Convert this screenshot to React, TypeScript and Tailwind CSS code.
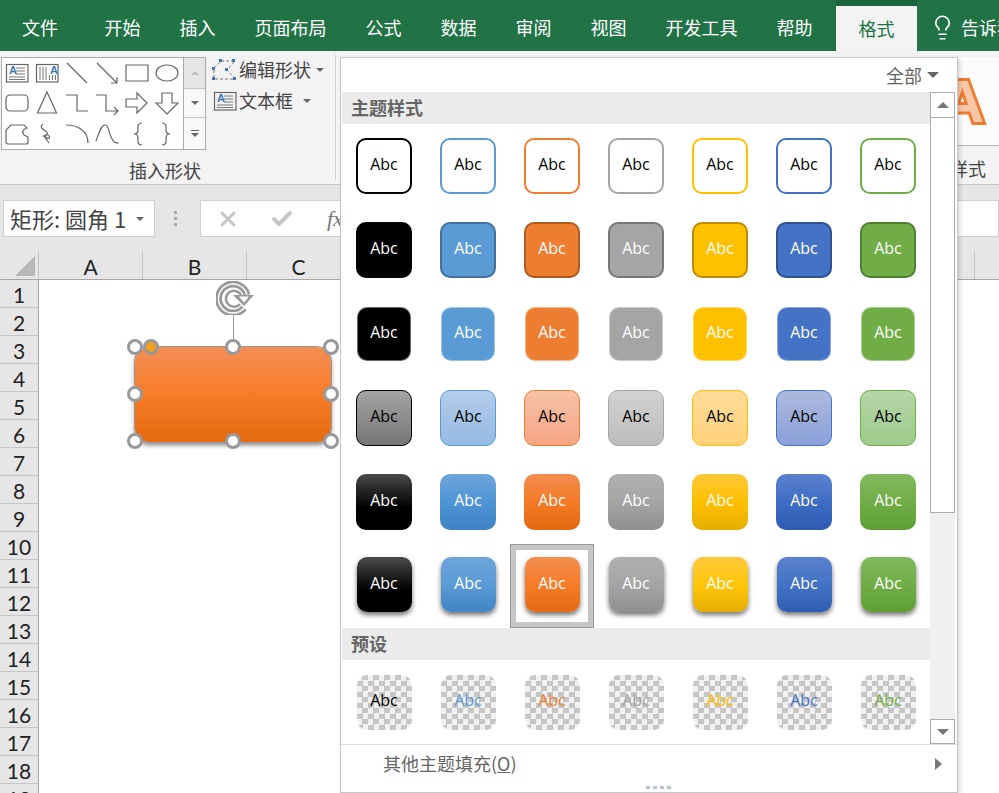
import { Check, Lightbulb, X } from 'lucide-react';

const TABS = [
  { label: '开始', className: 'ml-[5px]' },
  { label: '插入', className: '' },
  { label: '页面布局', className: '' },
  { label: '公式', className: '' },
  { label: '数据', className: '' },
  { label: '审阅', className: '' },
  { label: '视图', className: '' },
  { label: '开发工具', className: '' },
  { label: '帮助', className: '' },
];

const COLUMNS = ['A', 'B', 'C', 'D', 'E', 'F', 'G', 'H', 'I'];
const ROWS = Array.from({ length: 19 }, (_, i) => i + 1);

const ROW_1 = 'h-[56px] w-[56px] border-2 bg-white text-black';
const ROW_2 = 'h-[56px] w-[56px] border-2 text-white';
const ROW_3 = 'h-[54px] w-[54px] border border-white/40 text-white';
const ROW_4 = 'h-[56px] w-[56px] border text-black';
const ROW_5 = 'h-[56px] w-[56px] text-white';
const ROW_6 = 'h-[55px] w-[55px] text-white shadow-[0_3px_5px_rgba(0,0,0,0.55)] mb-[3px]';

const THEME_ROWS = [
  [
    `${ROW_1} border-black`,
    `${ROW_1} border-[#5b9bd5]`,
    `${ROW_1} border-[#ed7d31]`,
    `${ROW_1} border-[#a5a5a5]`,
    `${ROW_1} border-[#ffc000]`,
    `${ROW_1} border-[#4472c4]`,
    `${ROW_1} border-[#70ad47]`,
  ],
  [
    `${ROW_2} border-black bg-black`,
    `${ROW_2} border-[#41719c] bg-[#5b9bd5]`,
    `${ROW_2} border-[#ae5a21] bg-[#ed7d31]`,
    `${ROW_2} border-[#787878] bg-[#a5a5a5]`,
    `${ROW_2} border-[#bc8c00] bg-[#ffc000]`,
    `${ROW_2} border-[#2f528f] bg-[#4472c4]`,
    `${ROW_2} border-[#507e32] bg-[#70ad47]`,
  ],
  [
    `${ROW_3} bg-black`,
    `${ROW_3} bg-[#5b9bd5]`,
    `${ROW_3} bg-[#ed7d31]`,
    `${ROW_3} bg-[#a5a5a5]`,
    `${ROW_3} bg-[#ffc000]`,
    `${ROW_3} bg-[#4472c4]`,
    `${ROW_3} bg-[#70ad47]`,
  ],
  [
    `${ROW_4} border-black bg-[linear-gradient(#a3a3a3,#767676)]`,
    `${ROW_4} border-[#5b9bd5] bg-[linear-gradient(#b4cdea,#94b9e3)]`,
    `${ROW_4} border-[#ed7d31] bg-[linear-gradient(#f6c2a8,#f5a584)]`,
    `${ROW_4} border-[#a5a5a5] bg-[linear-gradient(#d2d2d2,#bdbdbd)]`,
    `${ROW_4} border-[#ffc000] bg-[linear-gradient(#ffdc9a,#ffd27a)]`,
    `${ROW_4} border-[#4472c4] bg-[linear-gradient(#adbade,#8aa0d8)]`,
    `${ROW_4} border-[#70ad47] bg-[linear-gradient(#b5d5a8,#9fcb8c)]`,
  ],
  [
    `${ROW_5} bg-[linear-gradient(#4a4a4a,#000_60%)]`,
    `${ROW_5} bg-[linear-gradient(#6ea5dc,#4f94d6_50%,#3f83c4)]`,
    `${ROW_5} bg-[linear-gradient(#f28e50,#f57a26_50%,#e4690f)]`,
    `${ROW_5} bg-[linear-gradient(#b0b0b0,#a5a5a5_50%,#8f8f8f)]`,
    `${ROW_5} bg-[linear-gradient(#ffc83a,#ffc000_50%,#e5ad00)]`,
    `${ROW_5} bg-[linear-gradient(#5b82cc,#3f6cc4_50%,#2e5cb2)]`,
    `${ROW_5} bg-[linear-gradient(#83b95e,#70ad47_50%,#5f9e34)]`,
  ],
  [
    `${ROW_6} bg-[linear-gradient(#4a4a4a,#000_60%)]`,
    `${ROW_6} bg-[linear-gradient(#6ea5dc,#5b9bd5_50%,#4185c6)]`,
    `${ROW_6} bg-[linear-gradient(#f28e50,#f87c28_50%,#e66a14)]`,
    `${ROW_6} bg-[linear-gradient(#b0b0b0,#a5a5a5_50%,#8f8f8f)]`,
    `${ROW_6} bg-[linear-gradient(#ffc83a,#ffc60a_50%,#e5ad00)]`,
    `${ROW_6} bg-[linear-gradient(#5b82cc,#4472c4_50%,#2e5cb2)]`,
    `${ROW_6} bg-[linear-gradient(#83b95e,#70ad47_50%,#5f9e34)]`,
  ],
];

const PRESET =
  'h-[55px] w-[55px] bg-[image:repeating-conic-gradient(#c6c6c6_0_25%,#f1f1f1_0_50%)] bg-[length:11px_11px]';

const PRESETS = [
  `${PRESET} text-black`,
  `${PRESET} text-[#5b9bd5]`,
  `${PRESET} text-[#ed7d31]`,
  `${PRESET} text-[#a5a5a5]`,
  `${PRESET} text-[#ffc000]`,
  `${PRESET} text-[#4472c4]`,
  `${PRESET} text-[#70ad47]`,
];

const HANDLES = [
  'left-[-8px] top-[-8px]',
  'left-[90px] top-[-8px]',
  'left-[188px] top-[-8px]',
  'left-[-8px] top-[39px]',
  'left-[188px] top-[39px]',
  'left-[-8px] top-[86px]',
  'left-[90px] top-[86px]',
  'left-[188px] top-[86px]',
];

function Swatch({ className, selected }: { className: string; selected?: boolean }) {
  return (
    <div
      className={`flex h-[84px] w-[84px] items-center justify-center ${
        selected ? 'shadow-[inset_0_0_0_1px_#999,inset_0_0_0_6px_#c6c6c6]' : ''
      }`}
    >
      <div
        className={`flex items-center justify-center rounded-[10px] pb-[4px] font-['Open_Sans',sans-serif] text-[16px] ${className}`}
      >
        Abc
      </div>
    </div>
  );
}

function Caret({ className }: { className: string }) {
  return <span className={`inline-block h-0 w-0 border-x-[4px] border-t-[4px] border-x-transparent ${className}`} />;
}

function TextBoxGlyph({ vertical }: { vertical?: boolean }) {
  return (
    <svg width="26" height="26" viewBox="0 0 26 26" fill="none" stroke="#777" strokeWidth="1">
      <rect x="2.5" y="4.5" width="21.5" height="17.5" stroke="#666" strokeWidth="1.2" />
      {vertical ? (
        <path d="M6 7v13M9 7v13M12 7v13M15.500 15v5M18.500 15v5M21.500 15v5" strokeDasharray="none" />
      ) : (
        <path d="M12 8h9M12 11h9M12 14h9M5 17h16M5 19.500h16" />
      )}
      <text
        x={vertical ? '16' : '5'}
        y="14"
        fill="#3f75b5"
        stroke="none"
        fontSize="11"
        fontWeight="700"
        fontFamily="Liberation Sans, sans-serif"
      >
        A
      </text>
    </svg>
  );
}

const SHAPE_PATHS = [
  'M3 3l20 20',
  'M3 3l20 20M23 17v6h-6',
  'M2 5h22v16H2z',
  'M13 5c6 0 11 3.500 11 8s-5 8-11 8-11-3.500-11-8 5-8 11-8z',
  'M6 5h14a4 4 0 0 1 4 4v8a4 4 0 0 1-4 4H6a4 4 0 0 1-4-4V9a4 4 0 0 1 4-4z',
  'M13 2l9.500 21h-19z',
  'M2 5h11v16h11',
  'M2 5h10v16h12M20 17l4 4-4 4',
  'M2 9h11V3l10 10-10 10v-6H2z',
  'M8 3h10v10h6L13 24 2 13h6z',
  'M7 4h13l3 3c-3 1-6 3-3 7l4 2v5a2 2 0 0 1-2 2H4a2 2 0 0 1-2-2v-12z',
  'M9 3c-3 2-2 4 1 6s5 3 2 5-4 0-1 2 6 2 4-1-5 0-3 3l3 4',
  'M2 4c12 0 22 6 22 18',
  'M2 20c3-8 5-16 9-16s3 6 6 12 4 6 8 6',
  'M18 2c-5 0-4 4-4 7s-1 4-4 4c3 0 4 1 4 4s-1 7 4 7',
  'M8 2c5 0 4 4 4 7s1 4 4 4c-3 0-4 1-4 4s1 7-4 7',
];

function ShapeGlyph({ d }: { d: string }) {
  return (
    <svg width="26" height="26" viewBox="0 0 26 26" fill="none" stroke="#666" strokeWidth="1.2">
      <path d={d} />
    </svg>
  );
}

function EditShapeGlyph() {
  return (
    <svg width="26" height="22" viewBox="0 0 26 22" fill="none">
      <path d="M2 9 9 2h14l-8 9 8 9H2z" stroke="#777" strokeDasharray="3 2" />
      <g fill="#3f75b5">
        <rect x="7" y="0" width="3" height="3" />
        <rect x="20" y="0" width="3" height="3" />
        <rect x="0" y="8" width="3" height="3" />
        <rect x="13" y="9" width="3" height="3" />
        <rect x="0" y="18" width="3" height="3" />
        <rect x="21" y="18" width="3" height="3" />
      </g>
    </svg>
  );
}

function RotateGlyph() {
  return (
    <svg width="40" height="34" viewBox="0 0 40 34" fill="none">
      <path d="M28 27a14.500 14.500 0 1 1 3-13" stroke="#999" strokeWidth="7" />
      <path d="M28 27a14.500 14.500 0 1 1 3-13" stroke="#fff" strokeWidth="1.500" />
      <path d="M24 23a8 8 0 1 1 1-9" stroke="#999" strokeWidth="2.500" fill="none" />
      <path d="M17 14h21l-10 11z" fill="#999" />
      <path d="M23 15.500h10l-5 6z" fill="#fff" />
    </svg>
  );
}

export default function App() {
  return (
    <div className="relative flex h-[793px] w-[999px] flex-col overflow-hidden bg-white font-['Noto_Sans_CJK_SC','Liberation_Sans',sans-serif] text-[18px] text-[#444]">
      {/* Tabs */}
      <div className="flex h-[51px] shrink-0 items-stretch whitespace-nowrap bg-[#217346] text-white">
        <div className="flex w-[80px] shrink-0 items-center pl-[22px] pt-[4px]">文件</div>
        {TABS.map((tab) => (
          <div key={tab.label} className={`flex shrink-0 items-center px-[19.5px] pt-[4px] ${tab.className}`}>
            {tab.label}
          </div>
        ))}
        <div className="ml-[4px] flex w-[81px] shrink-0 flex-col">
          <div className="h-[6px] bg-[#1c643d]" />
          <div className="flex flex-1 items-center justify-center bg-[#f3f3f3] text-[#217346]">格式</div>
        </div>
        <div className="ml-[12px] flex shrink-0 items-center gap-[5px] pt-[4px]">
          <Lightbulb size={27} strokeWidth={1.5} />
          <span>告诉我</span>
        </div>
      </div>

      {/* Ribbon */}
      <div className="flex h-[134px] shrink-0 border-b border-[#c6c6c6] bg-[#f3f3f3]">
        <div className="my-[4px] w-[336px] shrink-0 border-r border-[#d0d0d0] pt-[2px]">
          <div className="flex h-[100px]">
            <div className="ml-[1px] flex h-[93px] border border-[#ababab] bg-white">
              <div className="grid h-[91px] w-[181px] grid-cols-[repeat(6,30px)] grid-rows-3 place-items-center">
                <TextBoxGlyph />
                <TextBoxGlyph vertical />
                {SHAPE_PATHS.map((d) => (
                  <ShapeGlyph key={d} d={d} />
                ))}
              </div>
              <div className="flex w-[22px] flex-col border-l border-[#ababab] bg-[#f8f8f8]">
                <div className="flex h-[31px] items-center justify-center border-b border-[#c6c6c6] bg-[#e6e6e6]">
                  <span className="inline-block h-0 w-0 border-x-[4px] border-b-[4px] border-x-transparent border-b-[#c0c0c0]" />
                </div>
                <div className="flex h-[29px] items-center justify-center border-b border-[#c6c6c6]">
                  <Caret className="border-t-[#666]" />
                </div>
                <div className="flex flex-1 flex-col items-center justify-center gap-[2px]">
                  <span className="h-px w-[8px] bg-[#666]" />
                  <Caret className="border-t-[#666]" />
                </div>
              </div>
            </div>
            <div className="ml-[6px] flex flex-col gap-[8px] pt-[1px]">
              <div className="flex h-[23px] items-center whitespace-nowrap">
                <EditShapeGlyph />
                <span className="ml-[1px]">编辑形状</span>
                <Caret className="ml-[5px] border-t-[#666]" />
              </div>
              <div className="flex h-[23px] items-center whitespace-nowrap">
                <TextBoxGlyph />
                <span className="ml-[1px]">文本框</span>
                <Caret className="ml-[10px] border-t-[#666]" />
              </div>
            </div>
          </div>
          <div className="w-[330px] text-center leading-[26px]">插入形状</div>
        </div>
        <div className="ml-auto flex w-[103px] shrink-0 flex-col pt-[6px]">
          <div className="flex h-[89px] items-center justify-end overflow-hidden border-b border-[#b5b5b5] bg-[#fbfbfb] pr-[15px]">
            <span className="pt-[2px] font-['Liberation_Sans',sans-serif] text-[60px] font-bold leading-none text-[#f8c7a8] [-webkit-text-stroke:6px_#ed7d31] [paint-order:stroke_fill]">
              A
            </span>
          </div>
          <div className="pt-[9px] leading-[26px]">艺术字样式</div>
        </div>
      </div>

      {/* Formula bar */}
      <div className="flex h-[66px] shrink-0 bg-[#e6e6e6] pt-[15px]">
        <div className="ml-[3px] flex h-[37px] w-[152px] items-center border border-[#cfcfcf] bg-white pl-[6px] text-[#444]">
          <span className="whitespace-nowrap text-[22px]">矩形: 圆角 1</span>
          <Caret className="ml-[10px] border-t-[#666]" />
        </div>
        <div className="ml-[19px] flex h-[37px] flex-col justify-center gap-[3px]">
          <span className="h-[3px] w-[3px] bg-[#a8a8a8]" />
          <span className="h-[3px] w-[3px] bg-[#a8a8a8]" />
          <span className="h-[3px] w-[3px] bg-[#a8a8a8]" />
        </div>
        <div className="ml-[23px] flex h-[37px] flex-1 items-center border border-[#cfcfcf] bg-white pl-[15px]">
          <X size={24} strokeWidth={3} className="text-[#c6c6c6]" />
          <Check size={24} strokeWidth={4} className="ml-[30px] text-[#c6c6c6]" />
          <span className="ml-[33px] font-['Liberation_Serif',serif] text-[22px] italic text-[#777]">fx</span>
        </div>
      </div>

      {/* Column headers */}
      <div className="flex h-[29px] shrink-0 border-b border-[#a6a6a6] bg-[#e6e6e6]">
        <div className="flex w-[39px] shrink-0 items-end justify-end border-r border-[#c6c6c6] pb-[3px] pr-[3px]">
          <span className="h-0 w-0 border-b-[20px] border-l-[20px] border-b-[#b8b8b8] border-l-transparent" />
        </div>
        {COLUMNS.map((col) => (
          <div
            key={col}
            className="flex w-[104px] shrink-0 items-center justify-center border-r border-[#c6c6c6] pt-[3px] font-['Lato',sans-serif] text-[21px] text-[#222]"
          >
            {col}
          </div>
        ))}
      </div>

      {/* Sheet */}
      <div className="flex-1 overflow-hidden">
        {ROWS.map((row) => (
          <div
            key={row}
            className="flex h-[28px] w-[39px] items-center justify-center border-b border-r border-b-[#c6c6c6] border-r-[#a6a6a6] bg-[#e6e6e6] pt-[3px] font-['Lato',sans-serif] text-[21px] text-[#222]"
          >
            {row}
          </div>
        ))}
      </div>

      {/* Selected shape */}
      <div className="absolute left-[135px] top-[347px] h-[95px] w-[196px] rounded-[14px] bg-[linear-gradient(#f28e55,#f87c28_50%,#e5690f)] shadow-[0_3px_5px_rgba(0,0,0,0.5)] outline outline-1 outline-[#999]">
        <div className="absolute left-[98px] top-[-37px] h-[37px] w-px bg-[#999]" />
        <div className="absolute left-[81px] top-[-66px]">
          <RotateGlyph />
        </div>
        {HANDLES.map((pos) => (
          <span key={pos} className={`absolute h-[16px] w-[16px] rounded-full border-[3px] border-[#999] bg-white ${pos}`} />
        ))}
        <span className="absolute left-[8px] top-[-8px] h-[16px] w-[16px] rounded-full border-[3px] border-[#999] bg-[#f0a01e]" />
      </div>

      {/* Style gallery dropdown */}
      <div className="absolute left-[340px] top-[57px] flex h-[736px] w-[618px] flex-col border border-[#c6c6c6] bg-white shadow-[2px_2px_4px_rgba(0,0,0,0.15)]">
        <div className="flex h-[34px] shrink-0 items-center justify-end pr-[18px] text-[#666]">
          全部
          <Caret className="ml-[5px] border-x-[6px] border-t-[6px] border-t-[#666]" />
        </div>
        <div className="flex h-[652px] shrink-0">
          <div className="ml-px w-[588px] shrink-0">
            <div className="flex h-[32px] items-center bg-[#ebebeb] pb-[2px] pl-[9px] font-bold text-[#666]">主题样式</div>
            {THEME_ROWS.map((swatches, r) => (
              <div key={r} className="grid grid-cols-[repeat(7,84px)]">
                {swatches.map((cls, c) => (
                  <Swatch key={c} className={cls} selected={r === 5 && c === 2} />
                ))}
              </div>
            ))}
            <div className="flex h-[32px] items-center bg-[#ebebeb] pb-[2px] pl-[9px] font-bold text-[#666]">预设</div>
            <div className="grid grid-cols-[repeat(7,84px)]">
              {PRESETS.map((cls) => (
                <Swatch key={cls} className={cls} />
              ))}
            </div>
          </div>
          <div className="flex w-[25px] shrink-0 flex-col bg-[#f0f0f0]">
            <div className="flex h-[26px] items-center justify-center border border-[#ababab] bg-white">
              <span className="inline-block h-0 w-0 border-x-[6px] border-b-[6px] border-x-transparent border-b-[#777]" />
            </div>
            <div className="h-[395px] border border-t-0 border-[#ababab] bg-white" />
            <div className="flex-1" />
            <div className="flex h-[25px] items-center justify-center border border-[#ababab] bg-white">
              <Caret className="border-x-[6px] border-t-[6px] border-t-[#777]" />
            </div>
          </div>
        </div>
        <div className="flex h-[38px] shrink-0 items-center justify-between border-t border-[#dcdcdc] pl-[43px] pr-[15px] text-[#666]">
          <span className="-ml-px">
            其他主题填充(<span className="underline">O</span>)
          </span>
          <span className="inline-block h-0 w-0 border-y-[6px] border-l-[7px] border-y-transparent border-l-[#777]" />
        </div>
        <div className="flex flex-1 items-center justify-center gap-[3px] pl-[18px]">
          <span className="h-[3px] w-[4px] bg-[#b8c4d0]" />
          <span className="h-[3px] w-[4px] bg-[#b8c4d0]" />
          <span className="h-[3px] w-[4px] bg-[#b8c4d0]" />
          <span className="h-[3px] w-[4px] bg-[#b8c4d0]" />
        </div>
      </div>
    </div>
  );
}
